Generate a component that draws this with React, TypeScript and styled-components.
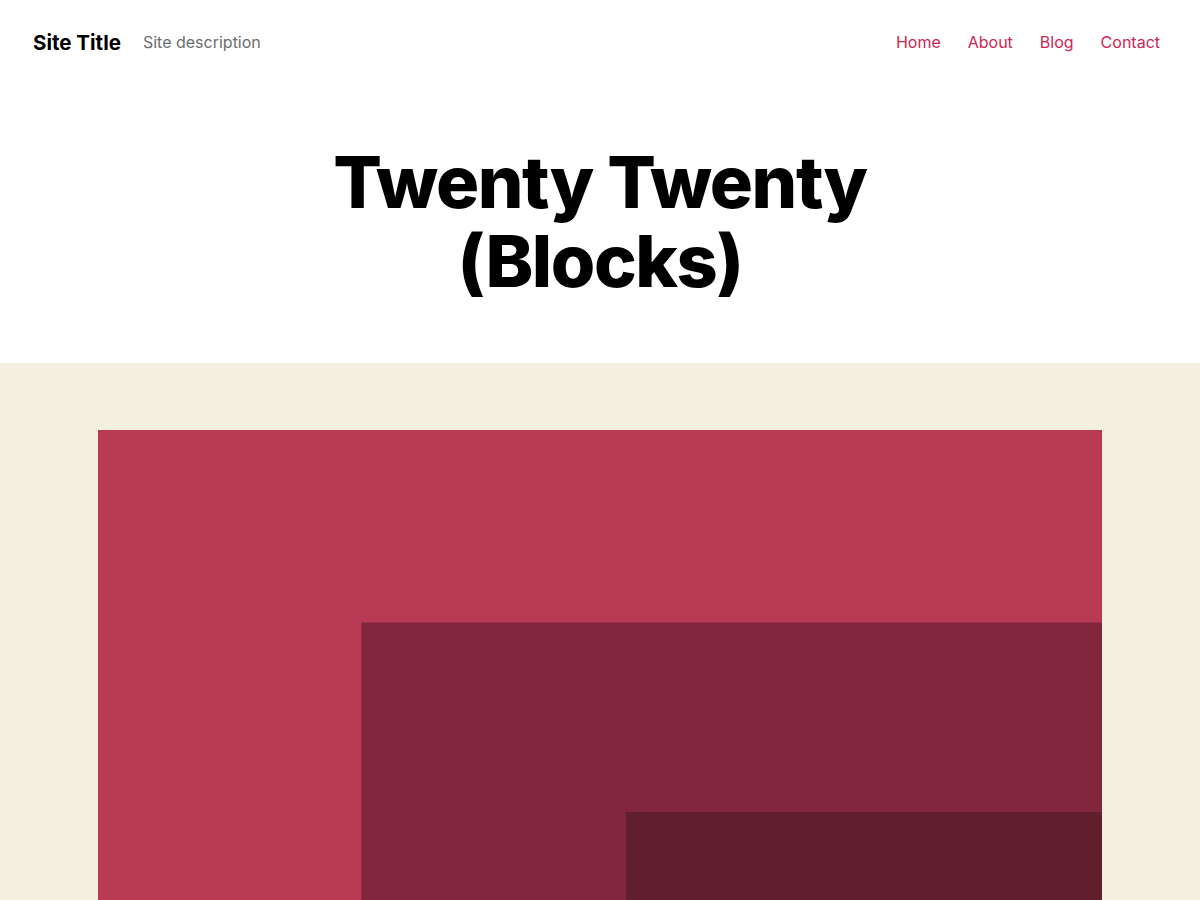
import React from "react";
import styled, { createGlobalStyle } from "styled-components";

const Global = createGlobalStyle`
  html, body { margin: 0; padding: 0; background: #ffffff; }
  body { font-family: Inter, "Noto Sans", sans-serif; color: #000; }
  * { box-sizing: border-box; }
`;

const Page = styled.div`
  width: 1200px;
  overflow: hidden;
`;

const Header = styled.header`
  display: flex;
  align-items: center;
  justify-content: space-between;
  height: 84px;
  padding: 0 40px 0 33px;
`;

const Brand = styled.div`
  display: flex;
  align-items: center;
  gap: 22px;
`;

const SiteTitle = styled.a`
  font-size: 20.5px;
  font-weight: 700;
  color: #000;
  text-decoration: none;
`;

const SiteDescription = styled.span`
  font-size: 16px;
  color: #6d6d6d;
`;

const Nav = styled.nav`
  display: flex;
  gap: 27px;
`;

const NavLink = styled.a`
  font-size: 16px;
  color: #cd2653;
  text-decoration: none;
`;

const Hero = styled.section`
  padding: 58px 0 63px;
  display: flex;
  justify-content: center;
`;

const Title = styled.h1`
  margin: 0;
  width: 700px;
  text-align: center;
  font-size: 72px;
  font-weight: 800;
  line-height: 1.1;
  letter-spacing: -0.02em;
`;

const Cover = styled.section`
  background: #f5efe0;
  padding: 67px 98px 0;
`;

const Art = styled.svg`
  display: block;
  width: 1004px;
  height: 500px;
`;

export default function App() {
  return (
    <Page>
      <Global />
      <Header>
        <Brand>
          <SiteTitle href="#">Site Title</SiteTitle>
          <SiteDescription>Site description</SiteDescription>
        </Brand>
        <Nav>
          <NavLink href="#">Home</NavLink>
          <NavLink href="#">About</NavLink>
          <NavLink href="#">Blog</NavLink>
          <NavLink href="#">Contact</NavLink>
        </Nav>
      </Header>
      <Hero>
        <Title>Twenty Twenty (Blocks)</Title>
      </Hero>
      <Cover>
        <Art viewBox="0 0 1004 500" aria-hidden="true">
          <rect x="0" y="0" width="1004" height="500" fill="#b83a54" />
          <rect x="263" y="192" width="741" height="308" fill="#82263e" />
          <rect x="263.5" y="192.5" width="741" height="308" fill="none" stroke="#9a2d47" strokeWidth="1" />
          <rect x="528" y="382" width="476" height="118" fill="#611e2d" />
        </Art>
      </Cover>
    </Page>
  );
}
